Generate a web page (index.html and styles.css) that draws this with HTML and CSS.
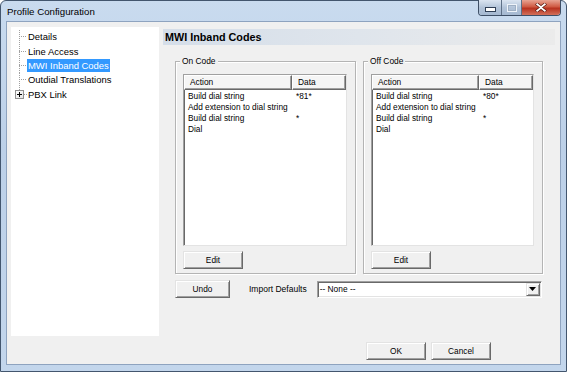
FILE: index.html
```html
<!DOCTYPE html>
<html lang="en">
<head>
    <meta charset="UTF-8">
    <title>Profile Configuration</title>
    <link rel="stylesheet" href="styles.css">
</head>
<body>
    <div class="window">
        <div class="titlebar">
            <span class="title">Profile Configuration</span>
            <div class="caption-buttons">
                <span class="cap-btn cap-min">
                    <svg width="11" height="5" viewBox="0 0 11 5"><rect x="0.5" y="0.5" width="10" height="4" fill="#fff" stroke="#2f3f55"/></svg>
                </span>
                <span class="cap-btn cap-max">
                    <svg width="10" height="8" viewBox="0 0 10 8"><rect x="0.5" y="0.5" width="9" height="7" fill="none" stroke="#eef3f9"/><rect x="1.5" y="1.5" width="7" height="5" fill="none" stroke="#9fb0c4"/></svg>
                </span>
                <span class="cap-btn cap-close">
                    <svg width="12" height="9" viewBox="0 0 12 9"><path d="M1 0.5 L6 4 L11 0.5 M1 8.5 L6 5 L11 8.5" stroke="#5a1a12" stroke-width="3.2" fill="none"/><path d="M1.5 0.8 L6 4.2 L10.5 0.8 M1.5 8.2 L6 4.8 L10.5 8.2" stroke="#fff" stroke-width="1.8" fill="none"/></svg>
                </span>
            </div>
        </div>

        <div class="client">
            <ul class="tree">
                <li><span class="twig"></span><span class="node">Details</span></li>
                <li><span class="twig"></span><span class="node">Line Access</span></li>
                <li><span class="twig"></span><span class="node selected">MWI Inband Codes</span></li>
                <li><span class="twig"></span><span class="node">Outdial Translations</span></li>
                <li><span class="twig twig-last"><span class="expander"></span></span><span class="node">PBX Link</span></li>
            </ul>

            <div class="pane">
                <div class="pane-header">MWI Inband Codes</div>

                <div class="groups">
                    <div class="group">
                        <span class="group-label">On Code</span>
                        <div class="list list-on">
                            <div class="list-head">
                                <span class="head-cell">Action</span>
                                <span class="head-cell">Data</span>
                            </div>
                            <div class="list-body">
                                <div class="row"><span>Build dial string</span><span>*81*</span></div>
                                <div class="row"><span>Add extension to dial string</span><span></span></div>
                                <div class="row"><span>Build dial string</span><span>*</span></div>
                                <div class="row"><span>Dial</span><span></span></div>
                            </div>
                        </div>
                        <button class="btn btn-edit">Edit</button>
                    </div>

                    <div class="group">
                        <span class="group-label">Off Code</span>
                        <div class="list list-off">
                            <div class="list-head">
                                <span class="head-cell">Action</span>
                                <span class="head-cell">Data</span>
                            </div>
                            <div class="list-body">
                                <div class="row"><span>Build dial string</span><span>*80*</span></div>
                                <div class="row"><span>Add extension to dial string</span><span></span></div>
                                <div class="row"><span>Build dial string</span><span>*</span></div>
                                <div class="row"><span>Dial</span><span></span></div>
                            </div>
                        </div>
                        <button class="btn btn-edit">Edit</button>
                    </div>
                </div>

                <div class="defaults-row">
                    <button class="btn btn-undo">Undo</button>
                    <span class="defaults-label">Import Defaults</span>
                    <div class="combo">
                        <span class="combo-text">-- None --</span>
                        <span class="combo-drop">
                            <svg width="7" height="4" viewBox="0 0 7 4"><path d="M0 0 H7 L3.5 4 Z" fill="#000"/></svg>
                        </span>
                    </div>
                </div>
            </div>

            <div class="footer">
                <button class="btn">OK</button>
                <button class="btn">Cancel</button>
            </div>
        </div>
    </div>
</body>
</html>
```

FILE: styles.css
```css
* {
    box-sizing: border-box;
}
body {
    margin: 0;
    font-family: "Liberation Sans", Arial, sans-serif;
    background: #fff;
}
.window {
    width: 567px;
    height: 372px;
    border: 1px solid #43566e;
    border-radius: 6px 6px 0 0;
    background: linear-gradient(to bottom, #c9dbef 0%, #bcd0e8 40%, #c3d6ec 100%);
    display: flex;
    flex-direction: column;
}
.titlebar {
    height: 21px;
    display: flex;
    justify-content: space-between;
    align-items: flex-start;
    padding-left: 6px;
    padding-right: 5px;
}
.title {
    font-family: "Liberation Sans", Arial, sans-serif;
    font-size: 9.7px;
    line-height: 12px;
    margin-top: 5px;
    color: #000;
}
.caption-buttons {
    display: flex;
    margin-top: -1px;
    border: 1px solid #3e4f66;
    border-top: none;
    border-radius: 0 0 4px 4px;
    overflow: hidden;
}
.cap-btn {
    height: 15px;
    display: flex;
    align-items: center;
    justify-content: center;
}
.cap-min {
    width: 23px;
    padding-top: 4px;
    background: linear-gradient(to bottom, #dbe5f1, #b3c4d9 50%, #a5b9d1);
    border-right: 1px solid #5d6f86;
}
.cap-max {
    width: 20px;
    background: linear-gradient(to bottom, #dbe5f1, #b3c4d9 50%, #a5b9d1);
    border-right: 1px solid #5d6f86;
}
.cap-close {
    width: 38px;
    background: linear-gradient(to bottom, #e8a493, #cf5a43 45%, #b8321f 55%, #d2705a);
}

.client {
    margin: 0 6px;
    width: 553px;
    height: 342px;
    background: #f0f0f0;
    box-shadow: 0 0 0 1px #8ea3bf;
    display: grid;
    grid-template-columns: 148px 392px;
    column-gap: 4px;
    align-content: start;
    padding: 5px 5px 0 4px;
}

/* tree */
.tree {
    list-style: none;
    margin: 0;
    padding: 2.5px 0 0 0;
    width: 148px;
    height: 309px;
    background: #fff;
    font-size: 9.45px;
    color: #000;
}
.tree li {
    display: flex;
    align-items: center;
    height: 14.4px;
}
.twig {
    width: 16px;
    align-self: stretch;
    flex: none;
    background:
        repeating-linear-gradient(to bottom, #a0a0a0 0 1px, transparent 1px 2px) 8px 0 / 1px 100% no-repeat,
        repeating-linear-gradient(to right, #a0a0a0 0 1px, transparent 1px 2px) 8px 50% / 8px 1px no-repeat;
}
.twig-last {
    display: flex;
    align-items: center;
    padding-left: 4px;
    background:
        repeating-linear-gradient(to bottom, #a0a0a0 0 1px, transparent 1px 2px) 8px 0 / 1px 3px no-repeat,
        repeating-linear-gradient(to right, #a0a0a0 0 1px, transparent 1px 2px) 13px 50% / 3px 1px no-repeat;
}
.expander {
    width: 9px;
    height: 9px;
    margin-top: 1px;
    border: 1px solid #919191;
    background:
        linear-gradient(#000, #000) center / 5px 1px no-repeat,
        linear-gradient(#000, #000) center / 1px 5px no-repeat,
        linear-gradient(to bottom right, #fff, #e4e4e4);
}
.node {
    padding: 0 1px;
    line-height: 13px;
    white-space: nowrap;
}
.node.selected {
    background: #3399ff;
    color: #fff;
}

/* right pane */
.pane {
    margin-top: 2px;
}
.pane-header {
    height: 16px;
    line-height: 16px;
    padding-left: 2px;
    font-size: 10.8px;
    font-weight: bold;
    color: #000;
    background: linear-gradient(to right, #d5dee9 0%, #dfe5ec 50%, #ebebeb 100%);
}
.groups {
    display: grid;
    grid-template-columns: 181px 180px;
    column-gap: 7px;
    padding-left: 12px;
    margin-top: 16px;
}
.group {
    border: 1px solid #b4b4b4;
    box-shadow: inset 1px 1px #fff, 1px 1px #fff;
    padding: 0 8px 4px 7px;
    font-size: 8.4px;
}
.group-label {
    display: block;
    width: fit-content;
    margin: -6px 0 0 -3px;
    padding: 0 2px;
    line-height: 11px;
    background: #f0f0f0;
}
.list {
    margin-top: 7px;
    height: 172px;
    background: #fff;
    border: 1px solid;
    border-color: #a0a0a0 #e3e3e3 #e3e3e3 #a0a0a0;
    box-shadow: inset 1px 1px #696969;
    --col: 108px;
}
.list-off {
    --col: 107px;
}
.list-head {
    display: grid;
    grid-template-columns: var(--col) 1fr;
    height: 15px;
}
.head-cell {
    border-top: 1px solid #fff;
    border-left: 1px solid #fff;
    border-right: 1px solid #696969;
    border-bottom: 1px solid #696969;
    box-shadow: inset -1px -1px #a0a0a0;
    background: #f5f5f5;
    padding-left: 5px;
    line-height: 12px;
}
.list-body {
    padding-top: 1px;
}
.row {
    display: grid;
    grid-template-columns: var(--col) 1fr;
    line-height: 11px;
    font-size: 8.3px;
}
.row span {
    padding-left: 4px;
    white-space: nowrap;
}

/* buttons */
.btn {
    display: block;
    width: 60px;
    height: 18px;
    padding: 0;
    font-family: "Liberation Sans", Arial, sans-serif;
    font-size: 8.3px;
    color: #000;
    background: #f0f0f0;
    border: 1px solid;
    border-color: #e3e3e3 #696969 #696969 #e3e3e3;
    box-shadow: inset 1px 1px #fff, inset -1px -1px #a0a0a0;
}
.btn-edit {
    margin-top: 5px;
}
.btn-undo {
    width: 55px;
}
.defaults-row {
    display: flex;
    align-items: center;
    padding-left: 12px;
    margin-top: 6px;
    font-size: 8.5px;
}
.defaults-label {
    margin-left: 19px;
}
.combo {
    display: flex;
    align-items: center;
    width: 225px;
    height: 17px;
    margin-left: 10px;
    background: #fff;
    border: 1px solid;
    border-color: #a0a0a0 #fff #fff #a0a0a0;
    box-shadow: inset 1px 1px #696969, inset -1px -1px #e3e3e3;
    font-size: 8.4px;
}
.combo-text {
    flex: 1;
    padding-left: 2px;
}
.combo-drop {
    width: 14px;
    height: 13px;
    margin-right: 1px;
    display: flex;
    align-items: center;
    justify-content: center;
    background: #f0f0f0;
    border: 1px solid;
    border-color: #e3e3e3 #696969 #696969 #e3e3e3;
    box-shadow: inset 1px 1px #fff, inset -1px -1px #a0a0a0;
}

.footer {
    grid-column: 1 / -1;
    display: flex;
    justify-content: flex-end;
    gap: 5px;
    margin-top: 6px;
    padding-right: 64px;
}
```
